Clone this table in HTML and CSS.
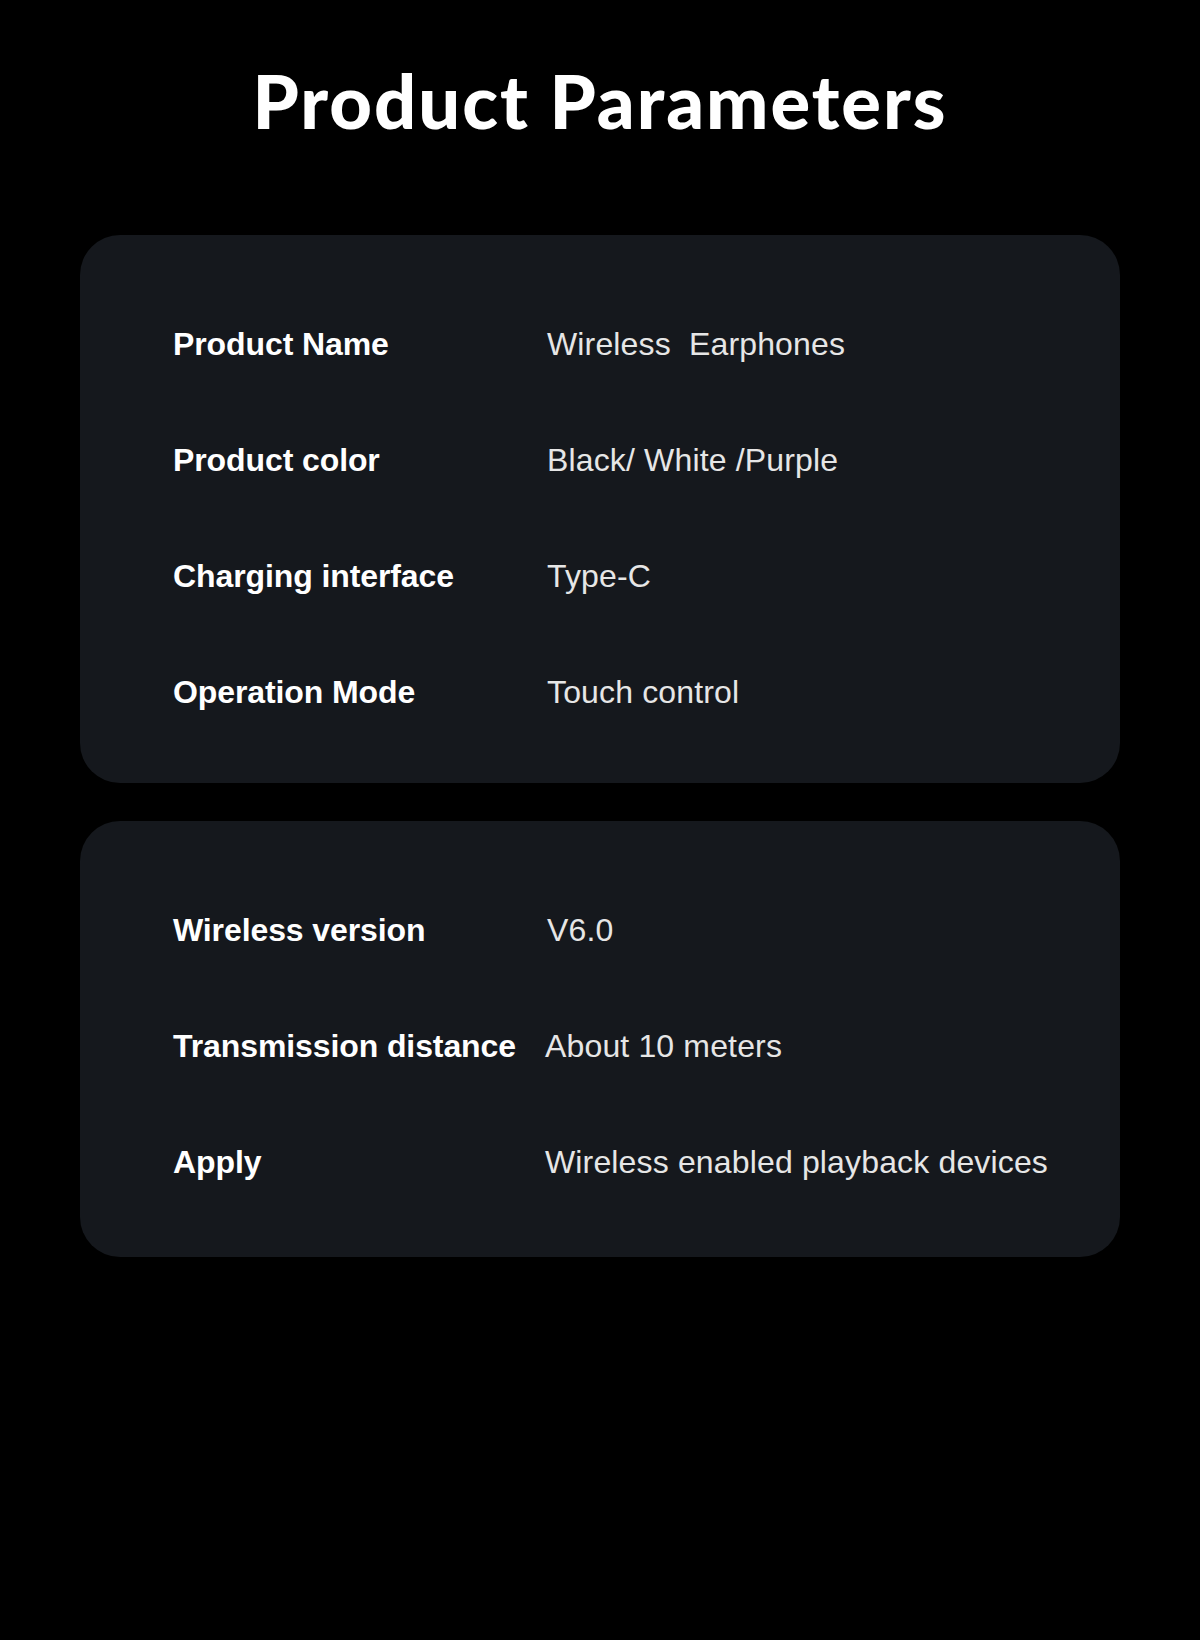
FILE: index.html
```html
<!DOCTYPE html>
<html lang="en">
<head>
<meta charset="utf-8">
<title>Product Parameters</title>
<link rel="stylesheet" href="styles.css">
</head>
<body>
<main class="page">
  <h1 class="title">Product Parameters</h1>
  <section class="card card-first">
    <div class="row"><span class="label">Product Name</span><span class="value">Wireless&nbsp; Earphones</span></div>
    <div class="row"><span class="label">Product color</span><span class="value">Black/ White /Purple</span></div>
    <div class="row"><span class="label">Charging interface</span><span class="value">Type-C</span></div>
    <div class="row"><span class="label">Operation Mode</span><span class="value">Touch control</span></div>
  </section>
  <section class="card card-second">
    <div class="row"><span class="label">Wireless version</span><span class="value">V6.0</span></div>
    <div class="row"><span class="label">Transmission distance</span><span class="value value-tight">About 10 meters</span></div>
    <div class="row"><span class="label">Apply</span><span class="value value-tight">Wireless enabled playback devices</span></div>
  </section>
</main>
</body>
</html>
```
FILE: styles.css
```css
html, body {
  margin: 0;
  padding: 0;
  background: #000;
}
.page {
  width: 1200px;
  height: 1640px;
  background: #000;
  display: flex;
  flex-direction: column;
  align-items: center;
  padding-top: 64px;
  box-sizing: border-box;
}
.title {
  margin: 0 0 97px 0;
  font-family: "Lato", "Inter", sans-serif;
  font-weight: 900;
  font-size: 74px;
  line-height: 74px;
  color: #fff;
  letter-spacing: 2px;
  text-align: center;
}
.card {
  width: 1040px;
  box-sizing: border-box;
  background: #15181d;
  border-radius: 40px;
  display: flex;
  flex-direction: column;
  gap: 80px;
  padding: 91px 0 73px 93px;
}
.card-second {
  margin-top: 38px;
  padding: 91px 0 77px 93px;
}
.row {
  display: flex;
  align-items: baseline;
  font-family: "Liberation Sans", Arial, sans-serif;
  font-size: 32px;
  line-height: 36px;
}
.label {
  width: 374px;
  flex: none;
  font-weight: 700;
  color: #fff;
  letter-spacing: -0.1px;
}
.value {
  font-weight: 400;
  color: #e6e6e6;
  letter-spacing: 0.15px;
}
.value-tight {
  margin-left: -2px;
}
```
